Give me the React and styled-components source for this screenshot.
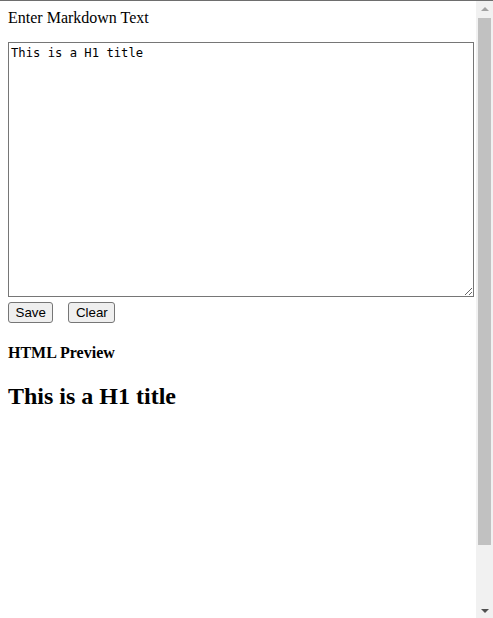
import React, { useState } from 'react';
import styled, { createGlobalStyle } from 'styled-components';

const GlobalStyle = createGlobalStyle`
  html, body {
    margin: 0;
    overflow: hidden;
  }
  body {
    font-family: "Liberation Serif", "Times New Roman", serif;
    font-size: 16px;
    color: #000;
    background: #fff;
  }
`

const Frame = styled.div`
  display: flex;
  height: 618px;
  box-sizing: border-box;
  border-top: 1px solid #6e6e6e;
`

const Main = styled.main`
  flex: 1;
  min-width: 0;
  padding: 8px 8px 8px;
  overflow: hidden;
`

const ScrollBar = styled.div`
  width: 17px;
  flex-shrink: 0;
  display: flex;
  flex-direction: column;
  background: #f1f1f1;
`

const ArrowButton = styled.div`
  height: 17px;
  display: flex;
  justify-content: center;
  align-items: center;

  &::before {
    content: '';
    width: 0;
    height: 0;
    border-left: 4px solid transparent;
    border-right: 4px solid transparent;
    ${(p) => (p.$down
      ? 'border-top: 4px solid #505050; margin-top: 2px;'
      : 'border-bottom: 4px solid #a3a3a3; margin-top: -2px;')}
  }
`

const Track = styled.div`
  flex: 1;
  padding: 0 2px;
`

const Thumb = styled.div`
  height: 527px;
  background: #c1c1c1;
`

const Editor = styled.div`
  display: flex;
  flex-direction: column;
  align-items: flex-start;
`

const Label = styled.label`
  display: block;
  line-height: 18px;
  margin-bottom: 15px;
`

const TextArea = styled.textarea`
  box-sizing: border-box;
  width: 466px;
  height: 255px;
  margin: 0;
  padding: 3px 2px 2px;
  border: 1px solid #767676;
  border-radius: 0;
  font-family: "DejaVu Sans Mono", "Liberation Mono", monospace;
  font-size: 12.2px;
  line-height: 15px;
  color: #000;
  resize: both;
  outline: none;
`

const ButtonRow = styled.div`
  display: flex;
  gap: 15px;
  margin-top: 5px;
`

const Button = styled.button`
  box-sizing: border-box;
  height: 21px;
  padding: 1px 6.5px;
  border: 1px solid #767676;
  border-radius: 3px;
  background: #efefef;
  font-family: "Liberation Sans", Arial, sans-serif;
  font-size: 13.33px;
  color: #000;
  cursor: pointer;
`

const PreviewTitle = styled.h4`
  font-size: 16px;
  font-weight: bold;
  margin: 21px 0;
`

// 미리보기 안의 제목은 섹션 안의 h1 크기 (1.5em)
const Preview = styled.section`
  h1 {
    font-size: 24px;
    font-weight: bold;
    margin: 20px 0;
  }
`

// 아주 단순한 마크다운 변환 (제목만)
const toHtml = (text) =>
  text.split('\n').map((line, i) => {
    const m = line.match(/^(#{1,6})\s+(.*)$/);
    if (m) {
      const Tag = `h${m[1].length}`;
      return <Tag key={i}>{m[2]}</Tag>;
    }
    return line ? <p key={i}>{line}</p> : null;
  });

const App = () => {
  const [text, setText] = useState('This is a H1 title');
  const [saved, setSaved] = useState('# This is a H1 title');

  return (
    <Frame>
      <GlobalStyle />
      <Main>
        <Editor>
          <Label htmlFor="md">Enter Markdown Text</Label>
          <TextArea id="md" value={text} onChange={(e) => setText(e.target.value)} />
          <ButtonRow>
            <Button onClick={() => setSaved(text.startsWith('#') ? text : `# ${text}`)}>Save</Button>
            <Button onClick={() => { setText(''); setSaved(''); }}>Clear</Button>
          </ButtonRow>
        </Editor>
        <PreviewTitle>HTML Preview</PreviewTitle>
        <Preview>{toHtml(saved)}</Preview>
      </Main>
      <ScrollBar>
        <ArrowButton />
        <Track>
          <Thumb />
        </Track>
        <ArrowButton $down />
      </ScrollBar>
    </Frame>
  );
};

export default App;
